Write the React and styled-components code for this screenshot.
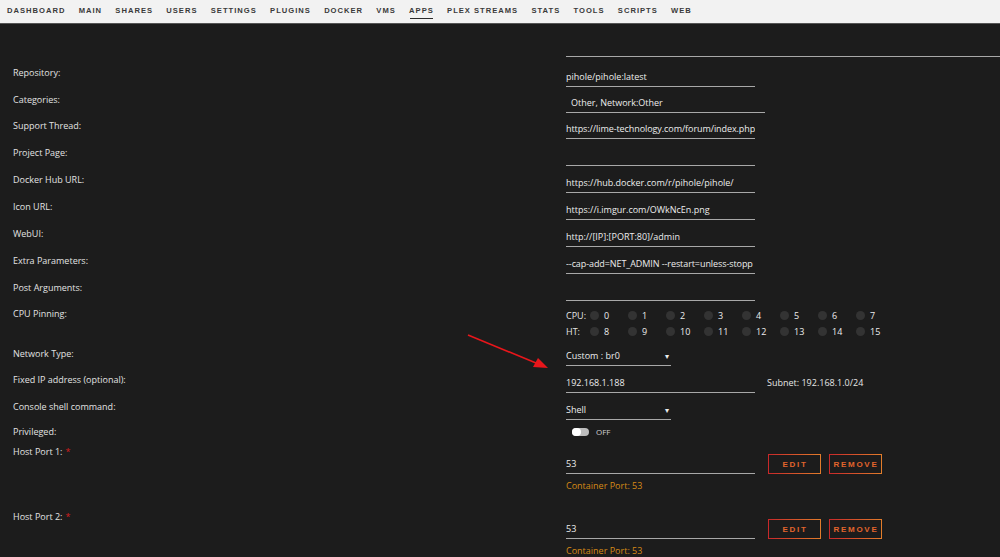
import React from 'react';
import styled, { createGlobalStyle } from 'styled-components';

const GlobalStyle = createGlobalStyle`
  html, body {
    margin: 0;
    padding: 0;
    background: #1c1c1c;
    overflow: hidden;
  }
  * { box-sizing: border-box; }
`

const Page = styled.div`
  position: relative;
  width: 1000px;
  height: 557px;
  overflow: hidden;
  background: #1c1c1c;
  font-family: "Open Sans", "Liberation Sans", sans-serif;
  color: #e4e4e4;
`

const Nav = styled.nav`
  display: flex;
  align-items: center;
  gap: 13.3px;
  height: 24px;
  padding: 0 0 1px 7px;
  background: #f2f2f2;
  border-bottom: 1px solid #555;
`

const NavItem = styled.a`
  position: relative;
  font-family: "Liberation Sans", Arial, sans-serif;
  font-weight: 700;
  font-size: 7.6px;
  letter-spacing: 1px;
  color: #3a3a3a;
  text-decoration: none;
  line-height: 22px;
  &::after{
    content: "";
    display: ${props => props.active ? 'block' : 'none'};
    position: absolute;
    left: 1px;
    right: 1px;
    bottom: 3px;
    height: 1px;
    background: #2a2a2a;
  }
`

const Form = styled.div`
  display: flex;
  flex-direction: column;
`

const Row = styled.div`
  display: grid;
  grid-template-columns: 553px 1fr;
  padding-left: 13px;
  height: ${props => props.h}px;
  align-items: ${props => props.top ? 'start' : 'center'};
`

const Label = styled.div`
  font-size: 9px;
  line-height: 14px;
  color: #e2e2e2;
  padding-top: ${props => props.pt || 0}px;
  em{
    color: #d41c1c;
    font-style: normal;
    margin-left: 3px;
  }
`

const Value = styled.div`
  align-self: ${props => props.align || 'end'};
  padding-top: ${props => props.pt || 0}px;
  display: flex;
  flex-direction: column;
`

const Input = styled.div`
  width: ${props => props.w || 189}px;
  height: 20px;
  line-height: 19px;
  padding-left: ${props => props.indent || 0}px;
  border-bottom: 1px solid #a8a8a8;
  font-size: 9px;
  letter-spacing: ${props => props.tight ? '-0.08px' : 'normal'};
  color: #ececec;
  white-space: nowrap;
  overflow: hidden;
`

const WideLine = styled.div`
  height: 1px;
  margin-bottom: 1px;
  background: #a8a8a8;
`

const Select = styled(Input)`
  width: 105px;
  display: flex;
  justify-content: space-between;
  padding-right: 2px;
  span{
    font-size: 8px;
  }
`

const InlineRow = styled.div`
  display: flex;
  align-items: flex-end;
`

const Side = styled.span`
  margin-left: 12px;
  font-size: 9px;
  line-height: 19px;
  height: 20px;
  color: #e6e6e6;
`

const CpuGrid = styled.div`
  display: flex;
  flex-direction: column;
  font-size: 9px;
`

const CpuLine = styled.div`
  display: flex;
  align-items: center;
  height: 16px;
  b{
    font-weight: 400;
    width: 24px;
  }
`

const Core = styled.span`
  display: flex;
  align-items: center;
  width: 38px;
  gap: 5px;
  color: #ececec;
  &::before{
    content: "";
    width: 9px;
    height: 9px;
    border-radius: 50%;
    background: #333;
  }
`

const Toggle = styled.div`
  display: flex;
  align-items: center;
  gap: 7px;
  margin-left: 6px;
  font-size: 8px;
  color: #cfcfcf;
`

const Track = styled.span`
  width: 17px;
  height: 8px;
  border-radius: 4px;
  background: #bdbdbd;
  position: relative;
  &::before{
    content: "";
    position: absolute;
    left: 0;
    top: 0;
    width: 9px;
    height: 8px;
    border-radius: 4px;
    background: #fff;
  }
`

const Button = styled.button`
  height: 20px;
  width: ${props => props.w}px;
  margin-left: ${props => props.ml}px;
  background: transparent;
  border: 1px solid;
  border-image: linear-gradient(90deg, #c8282a, #e27d2b) 1;
  font-family: "Liberation Sans", Arial, sans-serif;
  font-weight: 700;
  font-size: 8px;
  letter-spacing: 1.7px;
  color: #e2652c;
  padding: 0 0 0 1px;
`

const Hint = styled.div`
  font-size: 9px;
  line-height: 14px;
  margin-top: 5px;
  color: #d58a16;
`

const Arrow = styled.svg`
  position: absolute;
  left: 0;
  top: 0;
  pointer-events: none;
`

const navItems = ["Dashboard", "Main", "Shares", "Users", "Settings", "Plugins", "Docker", "VMs", "Apps", "Plex Streams", "Stats", "Tools", "Scripts", "Web"];

const fields = [
  { label: "Repository:", value: "pihole/pihole:latest", h: 29 },
  { label: "Categories:", value: "Other, Network:Other", h: 26, w: 199, indent: 5 },
  { label: "Support Thread:", value: "https://lime-technology.com/forum/index.php", h: 26, tight: true },
  { label: "Project Page:", value: "", h: 27 },
  { label: "Docker Hub URL:", value: "https://hub.docker.com/r/pihole/pihole/", h: 27 },
  { label: "Icon URL:", value: "https://i.imgur.com/OWkNcEn.png", h: 27 },
  { label: "WebUI:", value: "http://[IP]:[PORT:80]/admin", h: 27 },
  { label: "Extra Parameters:", value: "--cap-add=NET_ADMIN --restart=unless-stopp", h: 27, tight: true },
  { label: "Post Arguments:", value: "", h: 27 },
];

const PortRow = ({ n }) => (
  <Row h={65} top>
    <Label pt={2}>Host Port {n}:<em>*</em></Label>
    <Value align="start" pt={11}>
      <InlineRow>
        <Input>53</Input>
        <Button w={53} ml={13}>EDIT</Button>
        <Button w={53} ml={8}>REMOVE</Button>
      </InlineRow>
      <Hint>Container Port: 53</Hint>
    </Value>
  </Row>
)

export default function App() {
  return (
    <Page>
      <GlobalStyle />
      <Nav>
        {navItems.map(item => (
          <NavItem key={item} active={item === "Apps"}>{item.toUpperCase()}</NavItem>
        ))}
      </Nav>
      <Form>
        <Row h={34}>
          <span />
          <Value><WideLine /></Value>
        </Row>
        {fields.map(f => (
          <Row key={f.label} h={f.h}>
            <Label>{f.label}</Label>
            <Value>
              <Input w={f.w} indent={f.indent} tight={f.tight}>{f.value}</Input>
            </Value>
          </Row>
        ))}
        <Row h={41} top>
          <Label pt={6}>CPU Pinning:</Label>
          <Value align="start" pt={6}>
            <CpuGrid>
              <CpuLine>
                <b>CPU:</b>
                {[0, 1, 2, 3, 4, 5, 6, 7].map(c => <Core key={c}>{c}</Core>)}
              </CpuLine>
              <CpuLine>
                <b>HT:</b>
                {[8, 9, 10, 11, 12, 13, 14, 15].map(c => <Core key={c}>{c}</Core>)}
              </CpuLine>
            </CpuGrid>
          </Value>
        </Row>
        <Row h={24}>
          <Label>Network Type:</Label>
          <Value>
            <Select>Custom : br0<span>▾</span></Select>
          </Value>
        </Row>
        <Row h={27}>
          <Label>Fixed IP address (optional):</Label>
          <Value>
            <InlineRow>
              <Input>192.168.1.188</Input>
              <Side>Subnet: 192.168.1.0/24</Side>
            </InlineRow>
          </Value>
        </Row>
        <Row h={27}>
          <Label>Console shell command:</Label>
          <Value>
            <Select>Shell<span>▾</span></Select>
          </Value>
        </Row>
        <Row h={23}>
          <Label>Privileged:</Label>
          <Value align="center">
            <Toggle><Track />OFF</Toggle>
          </Value>
        </Row>
        <PortRow n={1} />
        <PortRow n={2} />
      </Form>
      <Arrow width="1000" height="557" viewBox="0 0 1000 557">
        <line x1="468" y1="335" x2="536" y2="363" stroke="#e8161b" strokeWidth="1.6" />
        <polygon points="548,368 533,367 538,358" fill="#e8161b" />
      </Arrow>
    </Page>
  );
}
